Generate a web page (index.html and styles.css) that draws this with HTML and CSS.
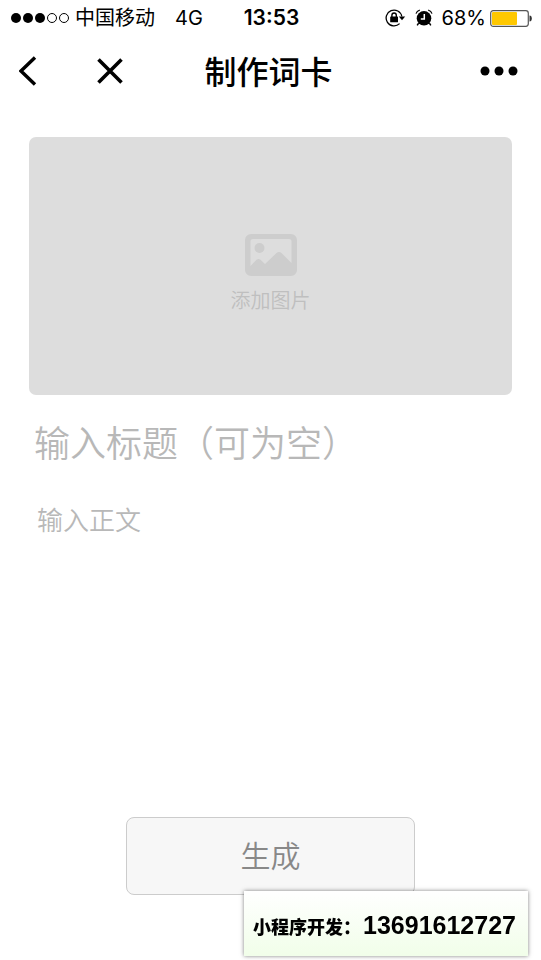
FILE: index.html
```html
<!DOCTYPE html>
<html lang="zh-CN">
<head>
    <meta charset="UTF-8">
    <meta name="viewport" content="width=device-width, initial-scale=1.0">
    <title>制作词卡</title>
    <link rel="stylesheet" href="styles.css">
</head>
<body>
    <div class="status-bar">
        <div class="carrier">
            <svg class="signal" width="58" height="12" viewBox="0 0 58 12">
                <circle cx="5" cy="6" r="5"/>
                <circle cx="17" cy="6" r="5"/>
                <circle cx="29" cy="6" r="5"/>
                <circle class="empty" cx="41" cy="6" r="4.5"/>
                <circle class="empty" cx="53" cy="6" r="4.5"/>
            </svg>
            <span>中国移动</span>
            <span class="network">4G</span>
        </div>
        <span class="time">13:53</span>
        <div class="indicators">
            <svg width="21" height="20" viewBox="0 0 21 20">
                <path d="M14.6 15.6A7.900 7.900 0 1 1 16.800 8.500" fill="none" stroke="#000" stroke-width="1.3"/>
                <path d="M13.8 8.4h6.400l-3.200 3.800z"/>
                <rect x="5.2" y="8.500" width="7.800" height="5.800" rx="0.6"/>
                <path d="M6.900 9V7.200a2.200 2.200 0 0 1 4.400 0V9" fill="none" stroke="#000" stroke-width="1.4"/>
            </svg>
            <svg width="18" height="18" viewBox="0 0 18 18">
                <circle cx="9" cy="9.3" r="7.3"/>
                <path d="M3.6 14.2L2.2 16.4M14.4 14.2l1.4 2.2" stroke="#000" stroke-width="1.5"/>
                <path d="M1 4.6Q1.8 2 4.8 1.2M17 4.6Q16.2 2 13.2 1.2" fill="none" stroke="#000" stroke-width="1.2"/>
                <path d="M9.3 5v5H5.8" fill="none" stroke="#fff" stroke-width="1.5"/>
            </svg>
            <span class="percent">68%</span>
            <svg width="42" height="17" viewBox="0 0 42 17">
                <rect x="0.7" y="0.7" width="37.6" height="15.6" rx="2.5" fill="#fff" stroke="#555" stroke-width="1.2"/>
                <rect x="2" y="2" width="25" height="13" rx="1" fill="#ffc800"/>
                <path d="M39.5 5.500q2.300 0 2.300 3t-2.300 3z" fill="#333"/>
            </svg>
        </div>
    </div>

    <header class="nav-bar">
        <div class="nav-left">
            <button type="button" class="icon-btn" aria-label="返回">
                <svg width="18" height="30" viewBox="0 0 18 30">
                    <path d="M16 1.5L2 15l14 13.5" fill="none" stroke="#000" stroke-width="3.4"/>
                </svg>
            </button>
            <button type="button" class="icon-btn" aria-label="关闭">
                <svg width="26" height="26" viewBox="0 0 26 26">
                    <path d="M1.5 1.5l23 23M24.5 1.5l-23 23" fill="none" stroke="#000" stroke-width="3.6"/>
                </svg>
            </button>
        </div>
        <h1 class="nav-title">制作词卡</h1>
        <button type="button" class="icon-btn more" aria-label="更多">
            <svg width="38" height="10" viewBox="0 0 38 10">
                <circle cx="5" cy="5" r="4.5"/>
                <circle cx="19" cy="5" r="4.5"/>
                <circle cx="33" cy="5" r="4.5"/>
            </svg>
        </button>
    </header>

    <form class="card-form">
        <button type="button" class="upload">
            <svg width="52" height="42" viewBox="0 0 52 42">
                <path fill="#cdcdcd" fill-rule="evenodd" d="M6 0h40a6 6 0 0 1 6 6v30a6 6 0 0 1-6 6H6a6 6 0 0 1-6-6V6a6 6 0 0 1 6-6zM8 5a2.5 2.5 0 0 0-2.500 2.500V32l6-6.300q2-1.600 4 0l4.500 4.300L31.500 19q2.500-2 5 0L46.500 29V7.500A2.500 2.500 0 0 0 44 5z"/>
                <circle cx="14.5" cy="14" r="5" fill="#cdcdcd"/>
            </svg>
            <span>添加图片</span>
        </button>
        <input type="text" class="title-input" placeholder="输入标题（可为空）" aria-label="标题">
        <textarea class="body-input" placeholder="输入正文" aria-label="正文"></textarea>
        <button type="submit" class="submit-btn">生成</button>
    </form>

    <aside class="contact">
        <span class="contact-label">小程序开发：</span>
        <strong class="contact-phone">13691612727</strong>
    </aside>
</body>
</html>
```
FILE: styles.css
```css
/* Global Styles */
* {
    box-sizing: border-box;
}

body {
    font-family: "Liberation Sans", "Noto Sans CJK SC", sans-serif;
    margin: 0;
    min-height: 100vh;
    display: flex;
    flex-direction: column;
    background-color: #fff;
    color: #000;
}

button,
input,
textarea {
    font-family: inherit;
    margin: 0;
    padding: 0;
    border: none;
    background: none;
}

svg {
    display: block;
    flex: none;
}

/* Status Bar */
.status-bar {
    display: grid;
    grid-template-columns: 1fr auto 1fr;
    align-items: center;
    height: 36px;
    padding: 0 9px 0 11px;
    font-family: Inter, "Noto Sans CJK SC", sans-serif;
    font-size: 20px;
    line-height: 24px;
    white-space: nowrap;
}

.carrier,
.indicators {
    display: flex;
    align-items: center;
}

.carrier {
    gap: 6px;
}

.signal .empty {
    fill: none;
    stroke: #000;
}

.network {
    margin-left: 14px;
}

.time {
    font-size: 21px;
    font-weight: 600;
}

.indicators {
    justify-content: flex-end;
    gap: 9px;
}

.percent {
    margin-right: -5px;
}

/* Navigation */
.nav-bar {
    display: grid;
    grid-template-columns: 1fr auto 1fr;
    align-items: center;
    height: 70px;
    padding: 0 23px 0 19px;
}

.nav-left {
    display: flex;
    align-items: center;
    gap: 60px;
}

.icon-btn {
    cursor: pointer;
}

.more {
    justify-self: end;
}

.nav-title {
    margin: 0;
    padding-top: 4px;
    font-size: 32px;
    font-weight: 500;
    line-height: 40px;
}

/* Card Form */
.card-form {
    flex: 1;
    display: flex;
    flex-direction: column;
    padding: 31px 29px 65px;
}

.upload {
    display: flex;
    flex-direction: column;
    align-items: center;
    justify-content: center;
    gap: 10px;
    aspect-ratio: 483 / 258;
    padding-top: 18px;
    border-radius: 7px;
    background-color: #ddd;
    color: #bfbfbf;
    font-size: 20px;
    font-weight: 350;
    line-height: 30px;
    cursor: pointer;
}

.title-input,
.body-input {
    width: 100%;
    outline: none;
    font-weight: 350;
}

.title-input {
    height: 56px;
    margin-top: 22px;
    padding: 0 5px;
    font-size: 36px;
}

.body-input {
    flex: 1;
    margin: 30px 0;
    padding: 0 8px;
    font-size: 26px;
    line-height: 36px;
    resize: none;
}

.title-input::placeholder,
.body-input::placeholder {
    color: #b8b8b8;
    opacity: 1;
}

.submit-btn {
    align-self: center;
    width: 60%;
    height: 78px;
    padding-bottom: 4px;
    border: 1px solid #ccc;
    border-radius: 8px;
    background-color: #f7f7f7;
    color: #888;
    font-size: 30px;
    font-weight: 350;
    cursor: pointer;
}

/* Contact Badge */
.contact {
    position: fixed;
    right: 13px;
    bottom: 4px;
    display: flex;
    align-items: center;
    gap: 2px;
    height: 65px;
    padding: 4px 12px 0 9px;
    background: linear-gradient(#fff, #f1fee9);
    box-shadow: 0 0 4px rgba(0, 0, 0, 0.5);
    white-space: nowrap;
}

.contact-label {
    font-size: 18px;
    font-weight: 900;
}

.contact-phone {
    font-size: 25px;
}
```
